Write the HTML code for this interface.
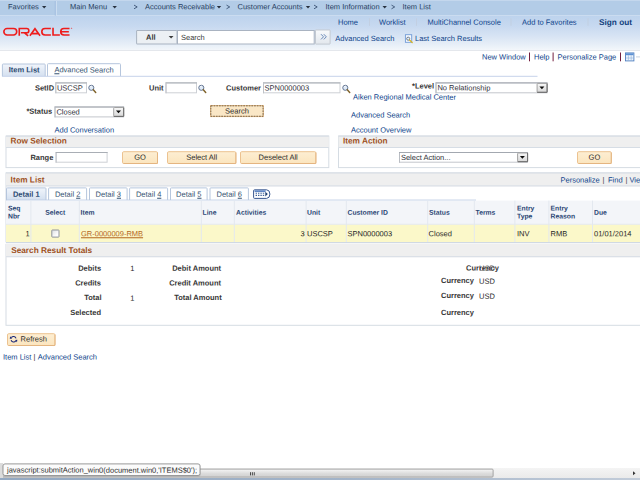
<!DOCTYPE html>
<html>
<head>
<meta charset="utf-8">
<title>Item List</title>
<style>
html,body{margin:0;padding:0;background:#fff;}
body{width:640px;height:480px;overflow:hidden;position:relative;font-family:"Liberation Sans",sans-serif;font-size:7.5px;color:#262626;}
#pg{position:absolute;left:0;top:0;width:640px;height:480px;overflow:hidden;background:#fff;}
#bg{position:absolute;left:0;top:0;}
.a{position:absolute;white-space:nowrap;line-height:10px;transform-origin:0 0;}
.nav{color:#263d5e;}
.lk{color:#0b4189;}
.lb{font-weight:bold;color:#363636;}
.gt{font-weight:bold;font-size:8.25px;color:#9e4f1c;}
.gh{font-weight:bold;font-size:6.8px;color:#2b4674;}
.it{color:#303038;}
.bt{color:#2a2a2a;}
.tb{color:#33506f;}
.tb.on{font-weight:bold;color:#2b4a72;}
</style>
</head>
<body>
<div id="pg">
<svg id="bg" width="640" height="480" viewBox="0 0 640 480">
<defs>
<linearGradient id="gHdr" x1="0" y1="0" x2="0" y2="1"><stop offset="0" stop-color="#bdd3ed"/><stop offset="0.3" stop-color="#c7d9f0"/><stop offset="0.6" stop-color="#d8e4f4"/><stop offset="0.86" stop-color="#e9f0f8"/><stop offset="1" stop-color="#f4f7fb"/></linearGradient>
<linearGradient id="gBtn" x1="0" y1="0" x2="0" y2="1"><stop offset="0" stop-color="#fdeed3"/><stop offset="1" stop-color="#fbe5be"/></linearGradient>
<linearGradient id="gTab" x1="0" y1="0" x2="0" y2="1"><stop offset="0" stop-color="#f1f5fb"/><stop offset="1" stop-color="#d4e0f0"/></linearGradient>
<linearGradient id="gArr" x1="0" y1="0" x2="0" y2="1"><stop offset="0" stop-color="#f8f8f8"/><stop offset="1" stop-color="#d8d8d8"/></linearGradient>
<linearGradient id="gAll" x1="0" y1="0" x2="0" y2="1"><stop offset="0" stop-color="#f8fafc"/><stop offset="1" stop-color="#e2e7ed"/></linearGradient>
<linearGradient id="gThumb" x1="0" y1="0" x2="0" y2="1"><stop offset="0" stop-color="#f7f7f7"/><stop offset="0.55" stop-color="#dcdcdc"/><stop offset="1" stop-color="#d0d0d0"/></linearGradient>
<linearGradient id="gTrack" x1="0" y1="0" x2="0" y2="1"><stop offset="0" stop-color="#f4f4f4"/><stop offset="1" stop-color="#eaeaea"/></linearGradient>
<linearGradient id="gChk" x1="0" y1="0" x2="1" y2="1"><stop offset="0" stop-color="#dcdfe3"/><stop offset="0.7" stop-color="#fdfdfd"/></linearGradient>
<linearGradient id="gBar" x1="0" y1="0" x2="1" y2="0"><stop offset="0" stop-color="#93a8c1"/><stop offset="0.55" stop-color="#a3b4c9"/><stop offset="1" stop-color="#c2ccd9"/></linearGradient>
</defs>
<!-- nav bar + header -->
<rect x="0" y="0" width="640" height="15.5" fill="#b3cce7"/>
<rect x="0" y="0" width="640" height="1" fill="#c4d7ed"/>
<rect x="0" y="15.5" width="640" height="35" fill="url(#gHdr)"/>
<rect x="0" y="50" width="640" height="1" fill="#e4e7ec"/>
<rect x="54.8" y="1" width="1" height="14.6" fill="#9db8dc"/>
<rect x="55.8" y="1" width="1" height="14.6" fill="#d2e1f2"/>
<path d="M42 6h4.4l-2.2 2.5z" fill="#27313f"/>
<path d="M112.5 6h4.4l-2.2 2.5z" fill="#27313f"/>
<path d="M216.8 6h4.4l-2.2 2.5z" fill="#27313f"/>
<path d="M305.8 6h4.4l-2.2 2.5z" fill="#27313f"/>
<path d="M382.5 6h4.4l-2.2 2.5z" fill="#27313f"/>
<path d="M134 5.1l3.2 1.85l-3.2 1.85" fill="none" stroke="#2c4364" stroke-width="0.8"/>
<path d="M226.5 5.1l3.2 1.85l-3.2 1.85" fill="none" stroke="#2c4364" stroke-width="0.8"/>
<path d="M314 5.1l3.2 1.85l-3.2 1.85" fill="none" stroke="#2c4364" stroke-width="0.8"/>
<path d="M391.5 5.1l3.2 1.85l-3.2 1.85" fill="none" stroke="#2c4364" stroke-width="0.8"/>
<g transform="translate(1.9 25.7) scale(0.9757 0.975)" fill="none" stroke="#ee1c1c" stroke-width="1.65">
<rect x="2" y="2.9" width="13.2" height="6.6" rx="3.3" ry="3.3"/>
<path d="M17.8 10.4V2.9H25.4a2.2 2.2 0 0 1 0 4.4H19.5M23.2 7.3L26.9 10.4"/>
<path d="M28.7 10.4L33.9 3.1L39.1 10.4M30.8 8.1H37"/>
<path d="M50.2 2.9H44.2a3.3 3.3 0 0 0 0 6.6H50.2"/>
<path d="M52.4 2V9.5H59.4"/>
<path d="M69.3 2.9H63.6a3.3 3.3 0 0 0 0 6.6H69.3M61 6.2H68.6"/>
<circle cx="71.4" cy="2.6" r="0.3" stroke-width="0.6"/>
</g>
<rect x="369" y="18.2" width="1" height="7.6" fill="#c2cfe2"/>
<rect x="416" y="18.2" width="1" height="7.6" fill="#c2cfe2"/>
<rect x="510.5" y="18.2" width="1" height="7.6" fill="#c2cfe2"/>
<rect x="587.5" y="18.2" width="1" height="7.6" fill="#c2cfe2"/>
<rect x="136.6" y="30.5" width="40.4" height="13.5" rx="0.3" fill="#ecf0f4" stroke="#a9b3c1" stroke-width="1"/>
<path d="M168.7 35.9h4.8l-2.4 2.7z" fill="#3a3a3a"/>
<rect x="177.5" y="30.5" width="136.7" height="13.5" fill="#fff" stroke="#a9b3c1" stroke-width="1"/>
<rect x="315.5" y="30" width="14.6" height="14.1" rx="0.4" fill="url(#gAll)" stroke="#c3c9d1" stroke-width="1"/>
<g transform="translate(320.2 33.6)"><path d="M0.8 0.6L3.3 3.2L0.8 5.8M3.6 0.6L6.1 3.2L3.6 5.8" fill="none" stroke="#6283b5" stroke-width="0.95"/></g>
<g transform="translate(404.8 34.1)"><rect x="0.6" y="0.6" width="6.3" height="7.6" fill="#f4f8fd" stroke="#709ad6" stroke-width="0.9"/><circle cx="3.4" cy="4.6" r="1.55" fill="#e8f0fa" stroke="#4b5b72" stroke-width="0.75"/><path d="M4.7 5.9L7.4 8.4" stroke="#d9b51f" stroke-width="1.25" stroke-linecap="round"/></g>
<rect x="529" y="52.5" width="1" height="8.8" fill="#74203f"/>
<rect x="552.6" y="52.5" width="1" height="8.8" fill="#74203f"/>
<rect x="620" y="52.5" width="1" height="8.8" fill="#74203f"/>
<g transform="translate(625 52.4)"><rect x="0.5" y="0.5" width="8.4" height="8" fill="#eef4fb" stroke="#4f7fc0" stroke-width="0.9"/><rect x="0.9" y="0.9" width="7.6" height="1.9" fill="#5b8fd3"/><path d="M3.4 2.8V8.4M6.2 2.8V8.4M0.9 5.6H8.5" stroke="#8eb1de" stroke-width="0.6"/></g>
<rect x="636" y="56.4" width="4" height="1" fill="#c9d3e0"/>
<!-- page tabs + search form -->
<path d="M2.4 76.3V64.8Q2.4 64 3.2 64H44.4Q45.2 64 45.2 64.8V76.3" fill="url(#gTab)" stroke="#b6c6dd" stroke-width="1"/>
<path d="M47.5 76.3V64.5Q47.5 63.7 48.3 63.7H119.7Q120.5 63.7 120.5 64.5V76.3" fill="#fff" stroke="#b6c6dd" stroke-width="1"/>
<rect x="2" y="75.8" width="535.5" height="1" fill="#c6d3ea"/>
<rect x="55.3" y="82.4" width="31.7" height="10.9" fill="#fff"/>
<rect x="55.8" y="82.9" width="30.7" height="9.9" fill="none" stroke="#cdd0d5" stroke-width="1"/>
<rect x="55.3" y="82.4" width="31.7" height="1" fill="#a9aeb5"/>
<rect x="55.3" y="83.4" width="1" height="9.9" fill="#bfc2c8"/>
<g transform="translate(88 84.5)"><circle cx="3.3" cy="3.3" r="2.55" fill="#dfeaf7" stroke="#5d6f8c" stroke-width="0.95"/><path d="M2 2.7A1.6 1.6 0 0 1 3.8 1.7" stroke="#fff" stroke-width="0.7" fill="none"/><path d="M5.3 5.3L7.7 7.9" stroke="#80642c" stroke-width="1.5" stroke-linecap="round"/></g>
<rect x="165.5" y="82.4" width="31.5" height="10.9" fill="#fff"/>
<rect x="166" y="82.9" width="30.5" height="9.9" fill="none" stroke="#cdd0d5" stroke-width="1"/>
<rect x="165.5" y="82.4" width="31.5" height="1" fill="#a9aeb5"/>
<rect x="165.5" y="83.4" width="1" height="9.9" fill="#bfc2c8"/>
<g transform="translate(198 84.5)"><circle cx="3.3" cy="3.3" r="2.55" fill="#dfeaf7" stroke="#5d6f8c" stroke-width="0.95"/><path d="M2 2.7A1.6 1.6 0 0 1 3.8 1.7" stroke="#fff" stroke-width="0.7" fill="none"/><path d="M5.3 5.3L7.7 7.9" stroke="#80642c" stroke-width="1.5" stroke-linecap="round"/></g>
<rect x="263" y="82.4" width="77.5" height="10.9" fill="#fff"/>
<rect x="263.5" y="82.9" width="76.5" height="9.9" fill="none" stroke="#cdd0d5" stroke-width="1"/>
<rect x="263" y="82.4" width="77.5" height="1" fill="#a9aeb5"/>
<rect x="263" y="83.4" width="1" height="9.9" fill="#bfc2c8"/>
<g transform="translate(342 84.5)"><circle cx="3.3" cy="3.3" r="2.55" fill="#dfeaf7" stroke="#5d6f8c" stroke-width="0.95"/><path d="M2 2.7A1.6 1.6 0 0 1 3.8 1.7" stroke="#fff" stroke-width="0.7" fill="none"/><path d="M5.3 5.3L7.7 7.9" stroke="#80642c" stroke-width="1.5" stroke-linecap="round"/></g>
<rect x="435.5" y="82.4" width="112" height="10.9" fill="#fff"/>
<rect x="436" y="82.9" width="111" height="9.9" fill="none" stroke="#c3c6cc" stroke-width="1"/>
<rect x="435.5" y="82.4" width="112" height="1" fill="#a3a8b0"/>
<rect x="435.5" y="83.4" width="1" height="9.9" fill="#b9bdc3"/>
<rect x="537.1" y="83.4" width="10" height="8.9" rx="0.8" fill="url(#gArr)" stroke="#a2a2a2" stroke-width="1"/>
<path d="M547.1 83.4V92.3H537.1" fill="none" stroke="#6a6a6a" stroke-width="1"/>
<path d="M539.4 86.4h5l-2.5 2.8z" fill="#0c0c0c"/>
<rect x="54.5" y="106.5" width="69.6" height="10.9" fill="#fff"/>
<rect x="55" y="107" width="68.6" height="9.9" fill="none" stroke="#c3c6cc" stroke-width="1"/>
<rect x="54.5" y="106.5" width="69.6" height="1" fill="#a3a8b0"/>
<rect x="54.5" y="107.5" width="1" height="9.9" fill="#b9bdc3"/>
<rect x="113.7" y="107.5" width="10" height="8.9" rx="0.8" fill="url(#gArr)" stroke="#a2a2a2" stroke-width="1"/>
<path d="M123.7 107.5V116.4H113.7" fill="none" stroke="#6a6a6a" stroke-width="1"/>
<path d="M116 110.5h5l-2.5 2.8z" fill="#0c0c0c"/>
<rect x="210.5" y="105.5" width="52.9" height="11.1" fill="#fae7c6" stroke="#f0c691" stroke-width="1"/>
<rect x="210.85" y="105.85" width="52.2" height="10.4" fill="none" stroke="#4e3f2a" stroke-width="0.75" stroke-dasharray="1.8 0.9"/>
<!-- group boxes -->
<rect x="6" y="136.1" width="322.8" height="31.5" fill="#fff" stroke="#d5dce3" stroke-width="1"/>
<rect x="6" y="135.6" width="322.8" height="12.4" fill="#efefef"/>
<rect x="6" y="135.6" width="322.8" height="1" fill="#cfd8e1"/>
<rect x="6" y="147" width="322.8" height="1" fill="#d6dde5"/>
<rect x="55.6" y="152" width="52" height="10.7" fill="#fff"/>
<rect x="56.1" y="152.5" width="51" height="9.7" fill="none" stroke="#cdd0d5" stroke-width="1"/>
<rect x="55.6" y="152" width="52" height="1" fill="#a9aeb5"/>
<rect x="55.6" y="153" width="1" height="9.7" fill="#bfc2c8"/>
<rect x="122.5" y="151.7" width="35" height="11.8" rx="1.2" fill="url(#gBtn)" stroke="#ecc290" stroke-width="1"/>
<path d="M157.5 152.7V163.5H123.5" fill="none" stroke="#e2b17c" stroke-width="1" opacity="0.8"/>
<rect x="167.5" y="151.7" width="68.4" height="11.8" rx="1.2" fill="url(#gBtn)" stroke="#ecc290" stroke-width="1"/>
<path d="M235.9 152.7V163.5H168.5" fill="none" stroke="#e2b17c" stroke-width="1" opacity="0.8"/>
<rect x="240.5" y="151.7" width="75.4" height="11.8" rx="1.2" fill="url(#gBtn)" stroke="#ecc290" stroke-width="1"/>
<path d="M315.9 152.7V163.5H241.5" fill="none" stroke="#e2b17c" stroke-width="1" opacity="0.8"/>
<rect x="338.5" y="136.1" width="309" height="31.5" fill="#fff" stroke="#d5dce3" stroke-width="1"/>
<rect x="338.5" y="135.6" width="310" height="12.4" fill="#efefef"/>
<rect x="338.5" y="135.6" width="310" height="1" fill="#cfd8e1"/>
<rect x="338.5" y="147" width="310" height="1" fill="#d6dde5"/>
<rect x="399" y="152" width="129" height="10.7" fill="#fff"/>
<rect x="399.5" y="152.5" width="128" height="9.7" fill="none" stroke="#c3c6cc" stroke-width="1"/>
<rect x="399" y="152" width="129" height="1" fill="#a3a8b0"/>
<rect x="399" y="153" width="1" height="9.7" fill="#b9bdc3"/>
<rect x="517.6" y="153" width="10" height="8.7" rx="0.8" fill="url(#gArr)" stroke="#a2a2a2" stroke-width="1"/>
<path d="M527.6 153V161.7H517.6" fill="none" stroke="#6a6a6a" stroke-width="1"/>
<path d="M519.9 156h5l-2.5 2.8z" fill="#0c0c0c"/>
<rect x="577.5" y="151.7" width="33.8" height="11.8" rx="1.2" fill="url(#gBtn)" stroke="#ecc290" stroke-width="1"/>
<path d="M611.3 152.7V163.5H578.5" fill="none" stroke="#e2b17c" stroke-width="1" opacity="0.8"/>
<!-- item list grid -->
<rect x="5.5" y="172.4" width="1" height="70" fill="#d5dce3"/>
<rect x="6" y="172.4" width="640" height="14" fill="#efefef"/>
<rect x="6" y="172.4" width="640" height="1" fill="#cfd8e1"/>
<rect x="6" y="185.4" width="640" height="1" fill="#d6dde5"/>
<path d="M6.5 200.1V188.7Q6.5 187.9 7.3 187.9H45.2Q46 187.9 46 188.7V200.1" fill="url(#gTab)" stroke="#b6c6dd" stroke-width="1"/>
<path d="M48.6 200.1V188.7Q48.6 187.9 49.4 187.9H85.8Q86.6 187.9 86.6 188.7V200.1" fill="#fff" stroke="#b6c6dd" stroke-width="1"/>
<path d="M89.5 200.1V188.7Q89.5 187.9 90.3 187.9H126.3Q127.1 187.9 127.1 188.7V200.1" fill="#fff" stroke="#b6c6dd" stroke-width="1"/>
<path d="M129.6 200.1V188.7Q129.6 187.9 130.4 187.9H166.8Q167.6 187.9 167.6 188.7V200.1" fill="#fff" stroke="#b6c6dd" stroke-width="1"/>
<path d="M170.5 200.1V188.7Q170.5 187.9 171.3 187.9H206.3Q207.1 187.9 207.1 188.7V200.1" fill="#fff" stroke="#b6c6dd" stroke-width="1"/>
<path d="M210 200.1V188.7Q210 187.9 210.8 187.9H247.6Q248.4 187.9 248.4 188.7V200.1" fill="#fff" stroke="#b6c6dd" stroke-width="1"/>
<rect x="6" y="199.6" width="470" height="1" fill="#bccbe4"/>
<g transform="translate(253 189.2)"><path d="M1.5 0.6H13.6Q16.9 0.8 16.9 4.9Q16.9 9 13.6 9.2H1.5Q0.6 9.2 0.6 8.3V1.5Q0.6 0.6 1.5 0.6Z" fill="#fff" stroke="#3a5890" stroke-width="1"/><path d="M1.6 1.1H12.6V2.9H1.6Z" fill="#5f86c4"/><path d="M2.6 4.1H4M5 4.1H6.4M7.4 4.1H8.8M9.8 4.1H11.2M2.6 6.2H4M5 6.2H6.4M7.4 6.2H8.8M9.8 6.2H11.2" stroke="#3d5f96" stroke-width="1.1"/><path d="M12.3 2.5L14.8 4.9L12.3 7.3Z" fill="#1d3d70"/></g>
<rect x="6" y="200.6" width="640" height="24" fill="#f3f5f9"/>
<rect x="6" y="223.8" width="640" height="1" fill="#e2e7ef"/>
<rect x="6" y="224.8" width="640" height="17.4" fill="#fbf8c9"/>
<rect x="6" y="242" width="640" height="1" fill="#d0d9e3"/>
<rect x="30.4" y="200.6" width="1" height="41.4" fill="#e3e8ef"/>
<rect x="78.8" y="200.6" width="1" height="41.4" fill="#e3e8ef"/>
<rect x="200.8" y="200.6" width="1" height="41.4" fill="#e3e8ef"/>
<rect x="233.8" y="200.6" width="1" height="41.4" fill="#e3e8ef"/>
<rect x="305.6" y="200.6" width="1" height="41.4" fill="#e3e8ef"/>
<rect x="345.8" y="200.6" width="1" height="41.4" fill="#e3e8ef"/>
<rect x="427.2" y="200.6" width="1" height="41.4" fill="#e3e8ef"/>
<rect x="473.8" y="200.6" width="1" height="41.4" fill="#e3e8ef"/>
<rect x="514.4" y="200.6" width="1" height="41.4" fill="#e3e8ef"/>
<rect x="548.4" y="200.6" width="1" height="41.4" fill="#e3e8ef"/>
<rect x="592" y="200.6" width="1" height="41.4" fill="#e3e8ef"/>
<rect x="51.8" y="230" width="7.2" height="7.1" rx="0.5" fill="url(#gChk)" stroke="#8e939a" stroke-width="1"/>
<!-- totals -->
<rect x="6" y="244.3" width="644" height="81" fill="#fff" stroke="#d5dce3" stroke-width="1"/>
<rect x="6" y="243.8" width="640" height="13.4" fill="#efefef"/>
<rect x="6" y="256.2" width="640" height="1" fill="#d6dde5"/>
<rect x="7.5" y="333.7" width="47.5" height="11.8" rx="1.2" fill="url(#gBtn)" stroke="#ecc290" stroke-width="1"/>
<path d="M55 334.7V345.5H8.5" fill="none" stroke="#e2b17c" stroke-width="1" opacity="0.8"/>
<g transform="translate(9.6 335.3)"><g transform="scale(0.88)"><path d="M7.3 3.6A3 3 0 0 0 2 2.6M1.7 5.4A3 3 0 0 0 7 6.4" fill="none" stroke="#1d2a78" stroke-width="1.25"/><path d="M0.6 1L2.8 3.8L0.2 4ZM8.4 8L6.2 5.2L8.8 5Z" fill="#1d2a78"/></g></g>
<!-- bottom chrome -->
<rect x="0" y="468" width="640" height="10" fill="url(#gTrack)"/>
<rect x="0.5" y="469.1" width="492.6" height="8" rx="1" fill="url(#gThumb)" stroke="#a3a3a3" stroke-width="1"/>
<rect x="250" y="472.2" width="0.9" height="3.2" fill="#3c3c3c"/>
<rect x="251.9" y="472.2" width="0.9" height="3.2" fill="#3c3c3c"/>
<rect x="253.8" y="472.2" width="0.9" height="3.2" fill="#3c3c3c"/>
<path d="M633 471.2v4l2.5 -2z" fill="#333"/>
<rect x="0" y="478" width="640" height="2.2" fill="url(#gBar)"/>
<rect x="0" y="463" width="3" height="15" fill="#dcdcdc"/>
<rect x="2.7" y="464" width="198" height="12.6" rx="2" fill="#000" opacity="0.12"/>
<rect x="3" y="463.9" width="197" height="11.6" rx="2" fill="#fbfbfb" stroke="#9a9a9a" stroke-width="1"/>
</svg>
<span class="a nav" style="left:8px;top:2px;transform:translate(0px,0.15px) rotate(0.05deg);">Favorites</span>
<span class="a nav" style="left:70px;top:2px;transform:translate(0px,0.15px) rotate(0.05deg);">Main Menu</span>
<span class="a nav" style="left:145px;top:2px;transform:translate(0px,0.15px) rotate(0.05deg);">Accounts Receivable</span>
<span class="a nav" style="left:237px;top:2px;transform:translate(0.5px,0.15px) rotate(0.05deg);">Customer Accounts</span>
<span class="a nav" style="left:325px;top:2px;transform:translate(0.5px,0.15px) rotate(0.05deg);">Item Information</span>
<span class="a nav" style="left:402px;top:2px;transform:translate(0.5px,0.15px) rotate(0.05deg);">Item List</span>
<span class="a lk" style="left:338px;top:17px;transform:translate(0px,0.65px) rotate(0.05deg);">Home</span>
<span class="a lk" style="left:379px;top:17px;transform:translate(0px,0.65px) rotate(0.05deg);">Worklist</span>
<span class="a lk" style="left:427px;top:17px;transform:translate(0.5px,0.65px) rotate(0.05deg);">MultiChannel Console</span>
<span class="a lk" style="left:522px;top:17px;transform:translate(0px,0.65px) rotate(0.05deg);">Add to Favorites</span>
<span class="a lk" style="left:599px;top:18px;transform:translate(0px,0.05px) rotate(0.05deg);font-weight:bold;font-size:8.25px;color:#123f7d;">Sign out</span>
<span class="a" style="left:146px;top:32px;transform:translate(0px,0.85px) rotate(0.05deg);font-weight:bold;color:#333;">All</span>
<span class="a" style="left:181px;top:33px;transform:translate(0px,0.05px) rotate(0.05deg);color:#3a3a3a;">Search</span>
<span class="a lk" style="left:335px;top:33px;transform:translate(0.3px,0.95px) rotate(0.05deg);">Advanced Search</span>
<span class="a lk" style="left:415px;top:33px;transform:translate(0px,0.95px) rotate(0.05deg);">Last Search Results</span>
<span class="a lk" style="left:482px;top:52px;transform:translate(0px,0.55px) rotate(0.05deg);">New Window</span>
<span class="a lk" style="left:534px;top:52px;transform:translate(0px,0.55px) rotate(0.05deg);">Help</span>
<span class="a lk" style="left:557px;top:52px;transform:translate(0.5px,0.55px) rotate(0.05deg);">Personalize Page</span>
<span class="a tb on" style="left:1px;width:43.8px;text-align:center;top:65px;transform:translate(1.3px,0.35px) rotate(0.05deg);">Item List</span>
<span class="a tb" style="left:47px;width:74px;text-align:center;top:65px;transform:translate(0px,0.35px) rotate(0.05deg);"><u>A</u>dvanced Search</span>
<span class="a lb" style="right:586px;top:83px;transform:translate(-0.1px,0.45px) rotate(0.05deg);">SetID</span>
<span class="a it" style="left:56px;top:83px;transform:translate(0.9px,0.5px) rotate(0.05deg);">USCSP</span>
<span class="a lb" style="right:476px;top:83px;transform:translate(0px,0.45px) rotate(0.05deg);">Unit</span>
<span class="a lb" style="right:379px;top:83px;transform:translate(0px,0.45px) rotate(0.05deg);">Customer</span>
<span class="a it" style="left:264px;top:83px;transform:translate(0.6px,0.5px) rotate(0.05deg);">SPN0000003</span>
<span class="a lb" style="right:206px;top:81px;transform:translate(0px,0.45px) rotate(0.05deg);">*Level</span>
<span class="a it" style="left:437px;top:83px;transform:translate(0.4px,0.35px) rotate(0.05deg);">No Relationship</span>
<span class="a lk" style="left:353px;top:92px;transform:translate(0px,0.55px) rotate(0.05deg);">Aiken Regional Medical Center</span>
<span class="a lb" style="right:587px;top:106px;transform:translate(-0.6px,0.75px) rotate(0.05deg);">*Status</span>
<span class="a it" style="left:56px;top:107px;transform:translate(0.4px,0.45px) rotate(0.05deg);">Closed</span>
<span class="a bt" style="left:210px;width:53.9px;text-align:center;top:106px;transform:translate(0px,0.4px) rotate(0.05deg);">Search</span>
<span class="a lk" style="left:351px;top:110px;transform:translate(0px,0.55px) rotate(0.05deg);">Advanced Search</span>
<span class="a lk" style="left:54px;top:125px;transform:translate(0.5px,0.55px) rotate(0.05deg);">Add Conversation</span>
<span class="a lk" style="left:351px;top:125px;transform:translate(0px,0.55px) rotate(0.05deg);">Account Overview</span>
<span class="a gt" style="left:10px;top:136px;transform:translate(0.5px,0.5px) rotate(0.05deg);">Row Selection</span>
<span class="a lb" style="right:586px;top:153px;transform:translate(-0.6px,0.05px) rotate(0.05deg);">Range</span>
<span class="a bt" style="left:122px;width:36px;text-align:center;top:152px;transform:translate(0px,0.8px) rotate(0.05deg);">GO</span>
<span class="a bt" style="left:167px;width:69.4px;text-align:center;top:152px;transform:translate(0px,0.8px) rotate(0.05deg);">Select All</span>
<span class="a bt" style="left:240px;width:76.4px;text-align:center;top:152px;transform:translate(0px,0.8px) rotate(0.05deg);">Deselect All</span>
<span class="a gt" style="left:343px;top:136px;transform:translate(0px,0.5px) rotate(0.05deg);">Item Action</span>
<span class="a it" style="left:400px;top:152px;transform:translate(0.9px,0.95px) rotate(0.05deg);">Select Action...</span>
<span class="a bt" style="left:577px;width:34.8px;text-align:center;top:152px;transform:translate(0px,0.8px) rotate(0.05deg);">GO</span>
<span class="a gt" style="left:10px;top:175px;transform:translate(0.6px,0.5px) rotate(0.05deg);">Item List</span>
<span class="a lk" style="left:560px;top:175px;transform:translate(0.5px,0.55px) rotate(0.05deg);">Personalize</span>
<span class="a" style="left:602px;top:175px;transform:translate(0.6px,0.55px) rotate(0.05deg);color:#444;">|</span>
<span class="a lk" style="left:608px;top:175px;transform:translate(0px,0.55px) rotate(0.05deg);">Find</span>
<span class="a" style="left:625px;top:175px;transform:translate(0.6px,0.55px) rotate(0.05deg);color:#444;">|</span>
<span class="a lk" style="left:629px;top:175px;transform:translate(0.5px,0.55px) rotate(0.05deg);">View All</span>
<span class="a tb on" style="left:6px;width:40.5px;text-align:center;top:189px;transform:translate(0px,0.65px) rotate(0.05deg);">Detail 1</span>
<span class="a tb" style="left:48px;width:39px;text-align:center;top:189px;transform:translate(0.1px,0.65px) rotate(0.05deg);">Detail <u>2</u></span>
<span class="a tb" style="left:89px;width:38.6px;text-align:center;top:189px;transform:translate(0px,0.65px) rotate(0.05deg);">Detail <u>3</u></span>
<span class="a tb" style="left:129px;width:39px;text-align:center;top:189px;transform:translate(0.1px,0.65px) rotate(0.05deg);">Detail <u>4</u></span>
<span class="a tb" style="left:170px;width:37.6px;text-align:center;top:189px;transform:translate(0px,0.65px) rotate(0.05deg);">Detail <u>5</u></span>
<span class="a tb" style="left:209px;width:39.4px;text-align:center;top:189px;transform:translate(0.5px,0.65px) rotate(0.05deg);">Detail <u>6</u></span>
<span class="a gh" style="left:8px;top:204px;line-height:8px;transform:translate(0px,0.6px) rotate(0.05deg);">Seq</span>
<span class="a gh" style="left:8px;top:212px;line-height:8px;transform:translate(0px,0.6px) rotate(0.05deg);">Nbr</span>
<span class="a gh" style="left:45px;top:208px;line-height:8px;transform:translate(0.2px,0.7px) rotate(0.05deg);">Select</span>
<span class="a gh" style="left:80px;top:208px;line-height:8px;transform:translate(0.6px,0.7px) rotate(0.05deg);">Item</span>
<span class="a gh" style="left:202px;top:208px;line-height:8px;transform:translate(0.5px,0.7px) rotate(0.05deg);">Line</span>
<span class="a gh" style="left:236px;top:208px;line-height:8px;transform:translate(0px,0.7px) rotate(0.05deg);">Activities</span>
<span class="a gh" style="left:307px;top:208px;line-height:8px;transform:translate(0px,0.7px) rotate(0.05deg);">Unit</span>
<span class="a gh" style="left:347px;top:208px;line-height:8px;transform:translate(0.5px,0.7px) rotate(0.05deg);">Customer ID</span>
<span class="a gh" style="left:429px;top:208px;line-height:8px;transform:translate(0px,0.7px) rotate(0.05deg);">Status</span>
<span class="a gh" style="left:475px;top:208px;line-height:8px;transform:translate(0.5px,0.7px) rotate(0.05deg);">Terms</span>
<span class="a gh" style="left:517px;top:204px;line-height:8px;transform:translate(0px,0.6px) rotate(0.05deg);">Entry</span>
<span class="a gh" style="left:517px;top:212px;line-height:8px;transform:translate(0px,0.6px) rotate(0.05deg);">Type</span>
<span class="a gh" style="left:550px;top:204px;line-height:8px;transform:translate(0.5px,0.6px) rotate(0.05deg);">Entry</span>
<span class="a gh" style="left:550px;top:212px;line-height:8px;transform:translate(0.5px,0.6px) rotate(0.05deg);">Reason</span>
<span class="a gh" style="left:594px;top:208px;line-height:8px;transform:translate(0px,0.7px) rotate(0.05deg);">Due</span>
<span class="a" style="right:610px;top:229px;transform:translate(-0.5px,0.25px) rotate(0.05deg);">1</span>
<span class="a" style="left:81px;top:229px;transform:translate(0px,0.25px) rotate(0.05deg);color:#b3661e;text-decoration:underline;">GR-0000009-RMB</span>
<span class="a" style="right:335px;top:229px;transform:translate(-0.5px,0.25px) rotate(0.05deg);">3</span>
<span class="a" style="left:307px;top:229px;transform:translate(0px,0.25px) rotate(0.05deg);">USCSP</span>
<span class="a" style="left:347px;top:229px;transform:translate(0.5px,0.25px) rotate(0.05deg);">SPN0000003</span>
<span class="a" style="left:428px;top:229px;transform:translate(0.6px,0.25px) rotate(0.05deg);">Closed</span>
<span class="a" style="left:517px;top:229px;transform:translate(0px,0.25px) rotate(0.05deg);">INV</span>
<span class="a" style="left:550px;top:229px;transform:translate(0.5px,0.25px) rotate(0.05deg);">RMB</span>
<span class="a" style="left:594px;top:229px;transform:translate(0px,0.25px) rotate(0.05deg);">01/01/2014</span>
<span class="a gt" style="left:11px;top:246px;transform:translate(0.2px,0px) rotate(0.05deg);">Search Result Totals</span>
<span class="a lb" style="right:538px;top:263px;transform:translate(-0.8px,0.75px) rotate(0.05deg);">Debits</span>
<span class="a" style="left:130px;top:263px;transform:translate(0.3px,0.95px) rotate(0.05deg);">1</span>
<span class="a lb" style="right:418px;top:263px;transform:translate(-0.8px,0.75px) rotate(0.05deg);">Debit Amount</span>
<span class="a lb" style="right:538px;top:278px;transform:translate(-0.8px,0.55px) rotate(0.05deg);">Credits</span>
<span class="a lb" style="right:418px;top:278px;transform:translate(-0.8px,0.55px) rotate(0.05deg);">Credit Amount</span>
<span class="a lb" style="right:538px;top:293px;transform:translate(-0.8px,0.05px) rotate(0.05deg);">Total</span>
<span class="a" style="left:130px;top:293px;transform:translate(0.3px,0.85px) rotate(0.05deg);">1</span>
<span class="a lb" style="right:418px;top:293px;transform:translate(-0.8px,0.05px) rotate(0.05deg);">Total Amount</span>
<span class="a lb" style="right:538px;top:308px;transform:translate(-0.8px,0.05px) rotate(0.05deg);">Selected</span>
<span class="a" style="left:479px;top:263px;transform:translate(0px,0.85px) rotate(0.05deg);color:#5a5a5a;">USD</span>
<span class="a lb" style="left:466px;top:263px;transform:translate(0px,0.55px) rotate(0.05deg);">Currency</span>
<span class="a lb" style="left:441px;top:276px;transform:translate(0px,0.05px) rotate(0.05deg);">Currency</span>
<span class="a" style="left:479px;top:276px;transform:translate(0px,0.75px) rotate(0.05deg);">USD</span>
<span class="a lb" style="left:441px;top:291px;transform:translate(0px,0.05px) rotate(0.05deg);">Currency</span>
<span class="a" style="left:479px;top:291px;transform:translate(0px,0.75px) rotate(0.05deg);">USD</span>
<span class="a lb" style="left:441px;top:308px;transform:translate(0px,0.05px) rotate(0.05deg);">Currency</span>
<span class="a bt" style="left:20px;top:334px;transform:translate(0.6px,0.5px) rotate(0.05deg);">Refresh</span>
<span class="a lk" style="left:3px;top:352px;transform:translate(0px,0.55px) rotate(0.05deg);">Item List</span>
<span class="a" style="left:33px;top:352px;transform:translate(0.6px,0.55px) rotate(0.05deg);color:#333;">|</span>
<span class="a lk" style="left:37px;top:352px;transform:translate(0.8px,0.55px) rotate(0.05deg);">Advanced Search</span>
<span class="a" style="left:7px;top:465px;transform:translate(0px,0.55px) rotate(0.05deg);color:#2d2d2d;">javascript:submitAction_win0(document.win0,'ITEMS$0');</span>
</div>
</body>
</html>
